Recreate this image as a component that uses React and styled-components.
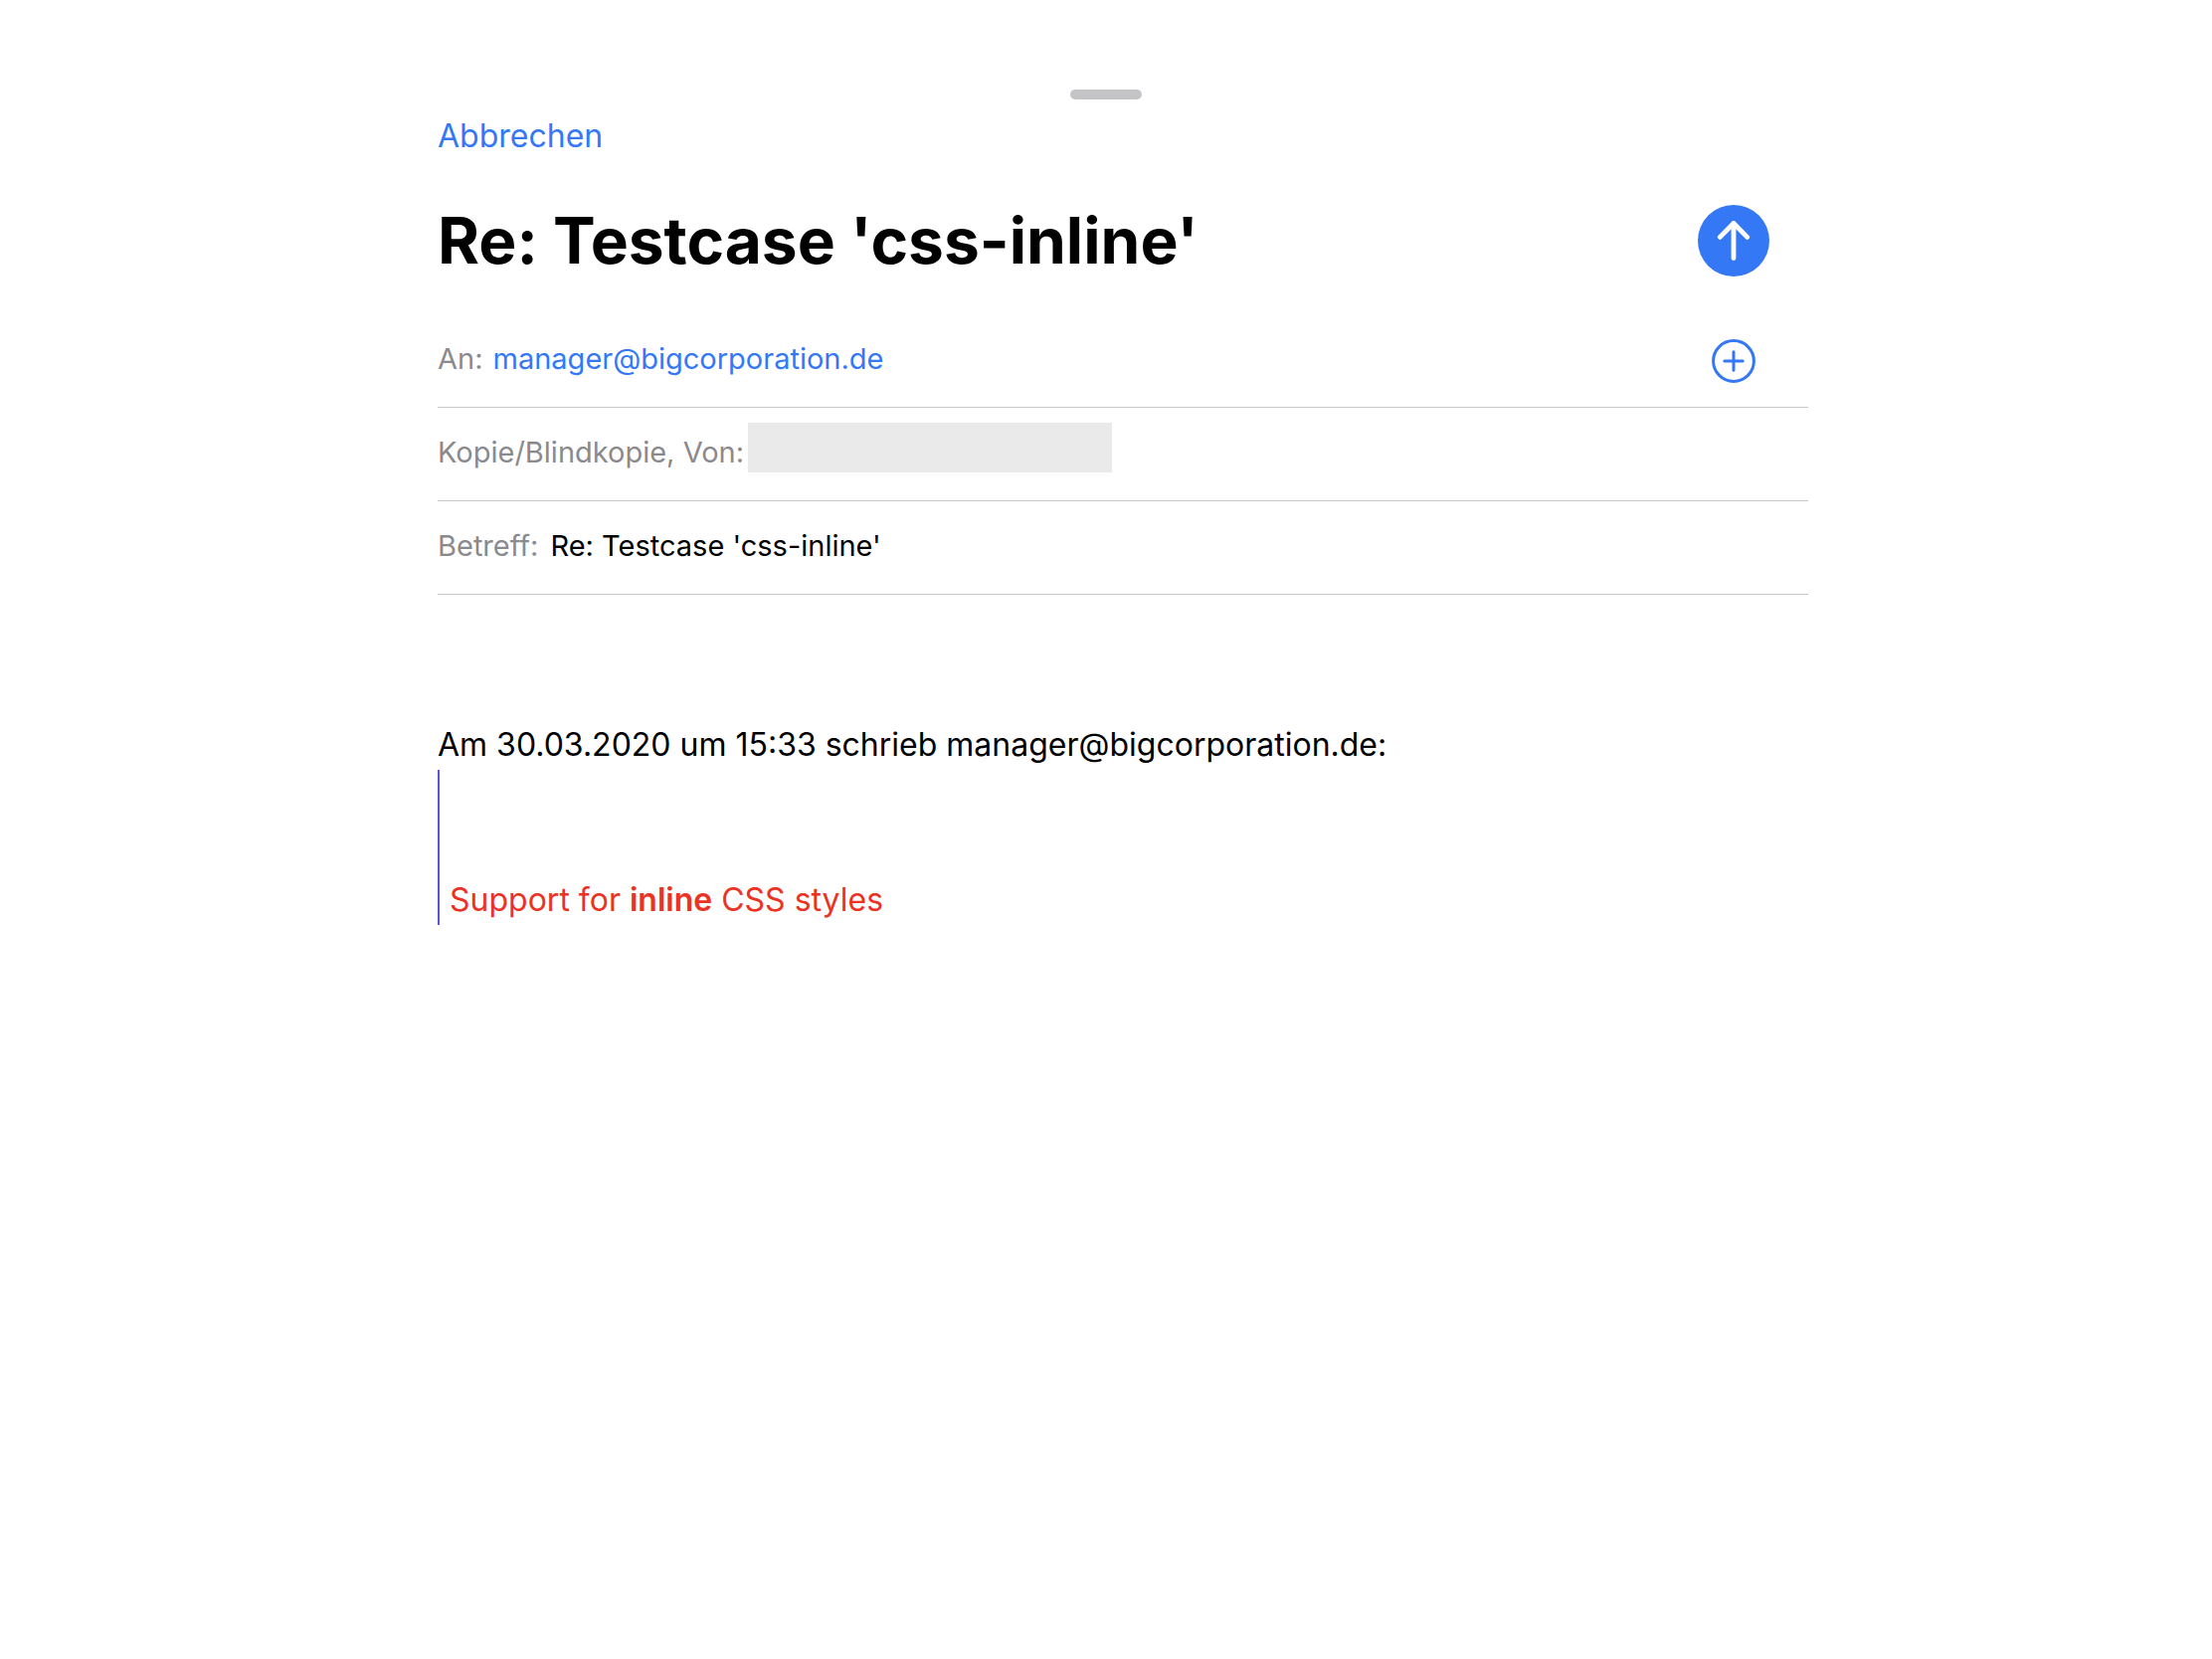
import React from "react";
import styled, { createGlobalStyle } from "styled-components";

const BLUE = "#3478f6";

const GlobalStyle = createGlobalStyle`
  *, *::before, *::after { box-sizing: border-box; }
  body {
    margin: 0;
    background: #fff;
    color: #000;
    font-family: Inter, "Liberation Sans", sans-serif;
    font-size: 32px;
    line-height: 39px;
  }
  button, input { font: inherit; color: inherit; }
`;

const Sheet = styled.div`
  display: flex;
  flex-direction: column;
  padding: 90px 406px 90px 440px;
`;

const GrabberRow = styled.div`
  display: flex;
  justify-content: center;
  margin: 0 -406px 0 -440px;
`;

const Grabber = styled.div`
  width: 72px;
  height: 10px;
  border-radius: 5px;
  background: #c4c4c6;
`;

const CancelButton = styled.button`
  align-self: flex-start;
  margin: 17px 0 0;
  padding: 0;
  border: 0;
  background: none;
  color: ${BLUE};
  cursor: pointer;
`;

const TitleRow = styled.header`
  display: flex;
  align-items: center;
  justify-content: space-between;
  margin-top: 46px;
  height: 80px;
`;

const Title = styled.h1`
  margin: 0;
  font-size: 64px;
  line-height: 80px;
  font-weight: 700;
`;

const Action = styled.div`
  display: flex;
  justify-content: center;
  align-items: center;
  flex: none;
  width: 72px;
  margin-right: 39px;
`;

const IconButton = styled.button`
  display: flex;
  padding: 0;
  border: 0;
  border-radius: 50%;
  background: none;
  cursor: pointer;
`;

const Fields = styled.form`
  display: flex;
  flex-direction: column;
  margin-top: 34px;
`;

const Field = styled.div`
  display: flex;
  align-items: center;
  gap: ${(p) => p.$gap}px;
  height: 94px;
  padding-bottom: 4px;
  border-bottom: 1px solid #c6c6c8;
  font-size: 29px;
  line-height: 36px;

  ${Action} {
    align-self: stretch;
    margin-bottom: -4px;
  }
`;

const Label = styled.label`
  flex: none;
  color: #8a8a8e;
`;

const Recipient = styled.a`
  flex: 1;
  color: ${BLUE};
  text-decoration: none;
`;

const Sender = styled.input`
  width: 366px;
  height: 50px;
  margin-bottom: 10px;
  padding: 0;
  border: 0;
  background: #eaeaea;
`;

const Subject = styled.input`
  flex: 1;
  height: 36px;
  padding: 0;
  border: 0;
  outline: 0;
  background: none;
`;

const Message = styled.article`
  margin-top: 131px;
`;

const Line = styled.p`
  margin: 0 0 6px;
`;

const Quote = styled.blockquote`
  margin: 0;
  padding: 111px 0 6px 10px;
  border-left: 2px solid #5856d6;
  color: #eb3223;

  strong { font-weight: 600; }
`;

function SendIcon() {
  return (
    <svg width="72" height="72" viewBox="0 0 72 72" aria-hidden="true">
      <circle cx="36" cy="36" r="36" fill={BLUE} />
      <path
        d="M36 53.5V18.5M22.3 32.4 36 18.5l13.7 13.9"
        fill="none"
        stroke="#fff"
        strokeWidth="4.8"
        strokeLinecap="round"
        strokeLinejoin="round"
      />
    </svg>
  );
}

function AddIcon() {
  return (
    <svg width="44" height="44" viewBox="0 0 44 44" aria-hidden="true">
      <g fill="none" stroke={BLUE} strokeWidth="3" strokeLinecap="round">
        <circle cx="22" cy="22" r="20.4" />
        <path d="M22 12.8v18.4M12.8 22h18.4" />
      </g>
    </svg>
  );
}

export default function App() {
  return (
    <>
      <GlobalStyle />
      <Sheet>
        <GrabberRow>
          <Grabber />
        </GrabberRow>
        <CancelButton type="button">Abbrechen</CancelButton>
        <TitleRow>
          <Title>Re: Testcase 'css-inline'</Title>
          <Action>
            <IconButton type="submit" form="compose" aria-label="Senden">
              <SendIcon />
            </IconButton>
          </Action>
        </TitleRow>
        <Fields id="compose" onSubmit={(e) => e.preventDefault()}>
          <Field $gap={10}>
            <Label as="span">An:</Label>
            <Recipient href="mailto:manager@bigcorporation.de">
              manager@bigcorporation.de
            </Recipient>
            <Action>
              <IconButton type="button" aria-label="Kontakt hinzufügen">
                <AddIcon />
              </IconButton>
            </Action>
          </Field>
          <Field $gap={4}>
            <Label htmlFor="sender">Kopie/Blindkopie, Von:</Label>
            <Sender id="sender" readOnly />
          </Field>
          <Field $gap={12}>
            <Label htmlFor="subject">Betreff:</Label>
            <Subject id="subject" defaultValue="Re: Testcase 'css-inline'" />
          </Field>
        </Fields>
        <Message>
          <Line>Am 30.03.2020 um 15:33 schrieb manager@bigcorporation.de:</Line>
          <Quote>
            Support for <strong>inline</strong> CSS styles
          </Quote>
        </Message>
      </Sheet>
    </>
  );
}
